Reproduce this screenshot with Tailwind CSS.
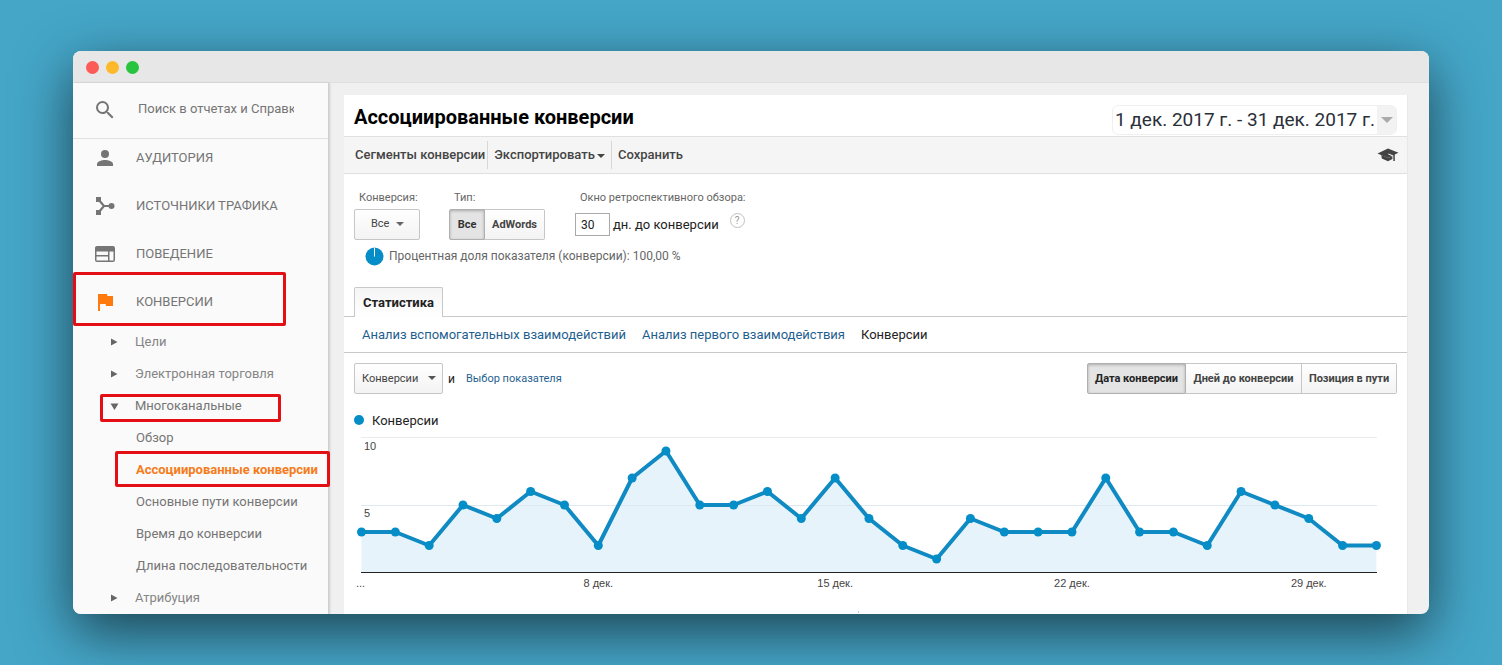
<!DOCTYPE html>
<html lang="ru">
<head>
  <meta charset="UTF-8" />
  <meta name="viewport" content="width=device-width, initial-scale=1.0" />
  <title>Ассоциированные конверсии</title>
  <script src="https://cdn.jsdelivr.net/npm/@tailwindcss/browser@4"></script>
</head>
<body class="bg-[#45a6c8] font-[Roboto,sans-serif] text-[13px] text-[#222]">
  <div class="min-h-screen flex flex-col px-[73px] pt-[51px] pb-[51px]">
    <div class="flex-1 flex flex-col rounded-lg overflow-hidden bg-[#f0f0f0] shadow-[0_18px_56px_rgba(0,0,0,0.6)]">

      <!-- Window bar -->
      <div class="h-8 bg-[#e7e7e7] border-b border-[#e0e0e0] flex items-center gap-[7px] px-[13px] pt-[2px]">
        <span class="w-[13px] h-[13px] rounded-full bg-[#fc5b57]"></span>
        <span class="w-[13px] h-[13px] rounded-full bg-[#fdb92c]"></span>
        <span class="w-[13px] h-[13px] rounded-full bg-[#28c33f]"></span>
      </div>

      <div class="flex-1 flex">
        <!-- Sidebar -->
        <aside class="relative z-10 w-64 shrink-0 bg-[#fafafa] border-r border-[#d0d0d0] shadow-[1px_0_2px_rgba(0,0,0,0.15)] text-[#757575]">
          <div class="h-14 flex items-center border-b border-[#e0e0e0] pl-[20px] pb-[2px]">
            <svg class="w-6 h-6 mr-5" viewBox="0 0 24 24" fill="currentColor"><path d="M15.5 14h-.79l-.28-.27A6.47 6.47 0 0 0 16 9.5 6.5 6.5 0 1 0 9.5 16c1.61 0 3.09-.59 4.23-1.57l.27.28v.79l5 4.99L20.49 19l-4.99-5zm-6 0C7.01 14 5 11.99 5 9.5S7.01 5 9.5 5 14 7.01 14 9.5 11.99 14 9.5 14z"/></svg>
            <input type="text" aria-label="Поиск" placeholder="Поиск в отчетах и Справке" class="w-[157px] pl-px pb-px bg-transparent outline-none placeholder:text-[#757575]" />
          </div>

          <nav class="pt-px">
            <ul class="flex flex-col gap-3">
              <li><a href="#" class="h-9 flex items-center pl-[20px] gap-[19px]">
                <svg class="w-6 h-6" viewBox="0 0 24 24" fill="currentColor"><circle cx="12" cy="8" r="4"/><path d="M4 20v-2c0-2.7 5.3-4 8-4s8 1.300 8 4v2z"/></svg>
                АУДИТОРИЯ</a></li>
              <li><a href="#" class="h-9 flex items-center pl-[20px] gap-[19px]">
                <svg class="w-6 h-6" viewBox="0 0 24 24" fill="currentColor"><path d="M3 3h5v5H3zM3 16h5v5H3z"/><circle cx="18.500" cy="12" r="3"/><path d="M5.500 5.500L11 12L5.500 18.500M11 12H18" fill="none" stroke="currentColor" stroke-width="2.200"/></svg>
                ИСТОЧНИКИ ТРАФИКА</a></li>
              <li><a href="#" class="h-9 flex items-center pl-[20px] gap-[19px]">
                <svg class="w-6 h-6" viewBox="0 0 24 24" fill="currentColor"><path fill-rule="evenodd" d="M4 4h16a2 2 0 0 1 2 2v12a2 2 0 0 1-2 2H4a2 2 0 0 1-2-2V6c0-1.100.9-2 2-2zM3.500 9.500V13H15V9.500zM3.500 14.500V18.500H15V14.500zM16.500 9.500V18.500H20.500V9.500z"/></svg>
                ПОВЕДЕНИЕ</a></li>
              <li class="relative"><a href="#" class="h-9 flex items-center pl-[20px] gap-[19px]">
                <svg class="w-6 h-6 text-[#ff7a0c]" viewBox="0 0 24 24" fill="currentColor"><path d="M14.400 6L14 4H5v17h2v-7h5.600l.4 2h7V6z"/></svg>
                КОНВЕРСИИ</a>
                <span class="absolute left-0 -top-[12px] w-[213px] h-[54px] rounded-xs border-3 border-[#e30f14]"></span></li>
            </ul>

            <ul class="mt-[6px]">
              <li><a href="#" class="h-8 flex items-center pl-[37px] gap-[13px] text-[#858585]">
                <svg class="w-3 h-3 text-[#666]" viewBox="0 0 12 12" fill="currentColor"><path d="M1 2.500L7.500 6L1 9.500z"/></svg>Цели</a></li>
              <li><a href="#" class="h-8 flex items-center pl-[37px] gap-[13px] text-[#858585]">
                <svg class="w-3 h-3 text-[#666]" viewBox="0 0 12 12" fill="currentColor"><path d="M1 2.500L7.500 6L1 9.500z"/></svg>Электронная торговля</a></li>
              <li class="relative"><a href="#" class="h-8 flex items-center pl-[37px] gap-[13px]">
                <svg class="w-3 h-3 text-[#666]" viewBox="0 0 12 12" fill="currentColor"><path d="M.5 3.500H8.500L4.500 10z"/></svg>Многоканальные</a>
                <span class="absolute left-[27px] top-[4px] w-[181px] h-[28px] rounded-xs border-3 border-[#e30f14]"></span></li>
              <li><a href="#" class="h-8 flex items-center pl-[63px]">Обзор</a></li>
              <li class="relative"><a href="#" class="h-8 flex items-center pl-[63px] font-bold text-[#f57c1b] whitespace-nowrap">Ассоциированные конверсии</a>
                <span class="absolute left-[42px] -top-[3px] w-[215px] h-[36px] rounded-xs border-3 border-[#e30f14]"></span></li>
              <li><a href="#" class="h-8 flex items-center pl-[63px]">Основные пути конверсии</a></li>
              <li><a href="#" class="h-8 flex items-center pl-[63px]">Время до конверсии</a></li>
              <li><a href="#" class="h-8 flex items-center pl-[63px]">Длина последовательности</a></li>
              <li><a href="#" class="h-8 -mb-px flex items-center pl-[37px] gap-[13px] text-[#858585]">
                <svg class="w-3 h-3 text-[#666]" viewBox="0 0 12 12" fill="currentColor"><path d="M1 2.500L7.500 6L1 9.500z"/></svg>Атрибуция</a></li>
            </ul>
          </nav>
        </aside>

        <!-- Report -->
        <main class="flex-1 min-w-0 pt-3 pl-[15px] pr-[21px] flex flex-col">
          <div class="flex-1 bg-white border-r border-[#e8e8e8]">
            <header class="h-[42px] border-b border-[#e0e0e0] flex items-center justify-between px-[10px]">
              <h1 class="text-[20px] font-bold text-black pt-[3px]">Ассоциированные конверсии</h1>
              <button class="mt-[8px] h-[30px] flex items-center border border-[#f0f0f0] rounded-md overflow-hidden text-[19px] text-[#2b2f38]">
                <span class="px-[2px] pt-[2px]">1 дек. 2017 г. - 31 дек. 2017 г.</span>
                <span class="h-full w-[19px] bg-[#f2f2f2] flex items-center justify-center">
                  <svg class="w-3 h-3 text-[#aaa]" viewBox="0 0 12 12" fill="currentColor"><path d="M0 3H12L6 9z"/></svg>
                </span>
              </button>
            </header>

            <div class="h-[37px] bg-[#f5f5f5] border-b border-[#e0e0e0] flex items-center pl-[11px] pr-2 font-medium text-[#444]">
              <button class="pr-[2px] h-7 border-r border-[#d8d8d8]">Сегменты конверсии</button>
              <button class="px-[6px] h-7 border-r border-[#d8d8d8] flex items-center gap-[2px]">Экспортировать
                <svg class="w-2 h-2 mt-[2px]" viewBox="0 0 8 8" fill="currentColor"><path d="M0 2H8L4 6z"/></svg>
              </button>
              <button class="px-[6px] h-7">Сохранить</button>
              <button class="ml-auto" aria-label="Обучение">
                <svg class="w-[22px] h-[16px] text-[#444]" viewBox="0 0 22 16" fill="currentColor"><path d="M11 1.500L21.500 5.700L17.800 7.500V14H16.300V8.600L11.500 6.600L11 7.300L15.200 9.200L11 11L.5 6.500z"/><path d="M4.300 8L11 11L15.400 9.200V12L11 14.200L4.800 11.500z"/></svg>
              </button>
            </div>

            <!-- Filters -->
            <div class="pt-4 pl-[10px] flex items-start text-[#666]">
              <div class="w-[95px]">
                <label for="conv" class="block h-[19px] leading-[15px] pl-[5px] text-[11px]">Конверсия:</label>
                <div class="relative w-[66px]">
                  <select id="conv" class="appearance-none w-full h-[31px] pl-4 text-[11px] rounded-xs border border-[#c6c6c6] bg-linear-to-b from-white to-[#f3f3f3] text-[#444]"><option>Все</option></select>
                  <svg class="absolute right-[16px] top-[11px] w-2 h-2 pointer-events-none" viewBox="0 0 8 8" fill="currentColor"><path d="M0 2H8L4 6z"/></svg>
                </div>
              </div>
              <div class="w-[126px]">
                <span class="block h-[19px] leading-[15px] pl-[5px] text-[11px]">Тип:</span>
                <div class="flex h-[31px] text-[11px] font-bold text-[#333]">
                  <button class="w-9 pt-px border border-[#b0b0b0] rounded-l-xs bg-[#e4e4e4] shadow-[inset_0_1px_3px_rgba(0,0,0,0.25)]">Все</button>
                  <button class="w-[60px] pt-px border border-l-0 border-[#c6c6c6] rounded-r-xs bg-linear-to-b from-white to-[#f3f3f3] text-[#444]">AdWords</button>
                </div>
              </div>
              <div>
                <label for="days" class="block h-[19px] leading-[15px] pl-[5px] text-[11px]">Окно ретроспективного обзора:</label>
                <div class="h-[31px] flex items-center text-[#222]">
                  <input id="days" type="text" value="30" class="w-[35px] h-[23px] pl-[5px] text-[12px] border border-[#aaa] mr-[3px]" />
                  дн. до конверсии
                  <button aria-label="Справка" class="ml-[11px] mb-2 w-[15px] h-[15px] rounded-full border border-[#c0c0c0] text-[10px] leading-[13px] text-[#999]">?</button>
                </div>
              </div>
            </div>
            <div class="pl-[21px] h-8 flex items-center gap-[5px] text-[12px] text-[#666]">
              <svg class="w-[19px] h-[19px]" viewBox="0 0 19 19"><circle cx="9.500" cy="9.500" r="9" fill="#058dc7"/><path d="M9.500 .5V9.500" stroke="#fff"/></svg>
              <span>Процентная доля показателя (конверсии): 100,00 %</span>
            </div>

            <!-- Tabs -->
            <div class="mt-[15px] pl-[10px] border-b border-[#c8c8c8]">
              <button class="relative -mb-px h-[30px] w-[89px] border border-b-0 border-[#c8c8c8] rounded-t-xs bg-linear-to-b from-[#f5f5f5] to-white font-bold">Статистика</button>
            </div>
            <div class="h-9 px-[18px] flex items-center gap-4 border-b border-[#c8c8c8] text-[#1f5f8f]">
              <a href="#">Анализ вспомогательных взаимодействий</a>
              <a href="#">Анализ первого взаимодействия</a>
              <span class="text-[#222]">Конверсии</span>
            </div>

            <!-- Metric picker -->
            <div class="pt-[10px] px-[10px] flex items-center text-[11px]">
              <div class="relative w-[89px]">
                <select aria-label="Показатель" class="appearance-none w-full h-[31px] pt-px pl-[7px] rounded-xs border border-[#c6c6c6] bg-linear-to-b from-white to-[#f3f3f3] text-[#444]"><option>Конверсии</option></select>
                <svg class="absolute right-[7px] top-[11px] w-2 h-2 pointer-events-none text-[#555]" viewBox="0 0 8 8" fill="currentColor"><path d="M0 2H8L4 6z"/></svg>
              </div>
              <span class="ml-[5px] text-[12px]">и</span>
              <a href="#" class="ml-[11px] pt-px text-[#1f5f8f]">Выбор показателя</a>
              <div class="ml-auto flex h-[31px] font-bold text-[#444]">
                <button class="w-[99px] pt-px border border-[#b0b0b0] rounded-l-xs bg-[#e4e4e4] shadow-[inset_0_1px_3px_rgba(0,0,0,0.25)] text-[#222]">Дата конверсии</button>
                <button class="w-[116px] pt-px border border-l-0 border-[#c6c6c6] bg-linear-to-b from-white to-[#f3f3f3]">Дней до конверсии</button>
                <button class="w-[95px] pt-px border border-l-0 border-[#c6c6c6] rounded-r-xs bg-linear-to-b from-white to-[#f3f3f3]">Позиция в пути</button>
              </div>
            </div>

            <div class="mt-4 pl-[10px] h-5 flex items-center gap-2">
              <span class="w-[10px] h-[10px] rounded-full bg-[#058dc7]"></span>
              <span class="pt-px">Конверсии</span>
            </div>

            <!-- Chart -->
            <svg id="chart" class="block w-full h-auto" viewBox="0 0 1063 183" font-family="Liberation Sans, Arial, sans-serif" font-size="11" fill="#444">
              <path d="M17 7.500H1033M17 75.500H1033" stroke="#ececec" fill="none"/>
              <path id="area" fill="#e6f3fa"/>
              <path d="M17 75.500H1033" stroke="#dde9ef" fill="none"/>
              <polyline id="line" fill="none" stroke="#0f8ac2" stroke-width="4" stroke-linejoin="round"/>
              <g id="dots" fill="#058dc7"></g>
              <path d="M17 142.500H1033" stroke="#222" fill="none"/>
              <text x="20" y="20">10</text>
              <text x="20" y="87">5</text>
              <text x="12" y="157">...</text>
              <g id="dates" text-anchor="middle"></g>
              <path d="M514.500 181V183" stroke="#ccc"/>
            </svg>
          </div>
        </main>
      </div>
    </div>
  </div>

  <script>
    // conversions per day, 1-31 December
    const values = [3, 3, 2, 5, 4, 6, 5, 2, 7, 9, 5, 5, 6, 4, 7, 4, 2, 1, 4, 3, 3, 3, 7, 3, 3, 2, 6, 5, 4, 2, 2];
    const baseline = 142.5;
    const points = values.map((v, i) => [17.5 + i * 33.83, baseline - v * 13.5]);
    const path = points.map(p => p.join(",")).join(" ");

    document.getElementById("line").setAttribute("points", path);
    document.getElementById("area").setAttribute("d", `M17.5,${baseline} L${path} L${points[30][0]},${baseline}z`);
    document.getElementById("dots").innerHTML = points.map(([x, y]) => `<circle cx="${x}" cy="${y}" r="4.5"/>`).join("");
    document.getElementById("dates").innerHTML = [8, 15, 22, 29].map(d => `<text x="${points[d - 1][0]}" y="157">${d} дек.</text>`).join("");
  </script>
</body>
</html>
